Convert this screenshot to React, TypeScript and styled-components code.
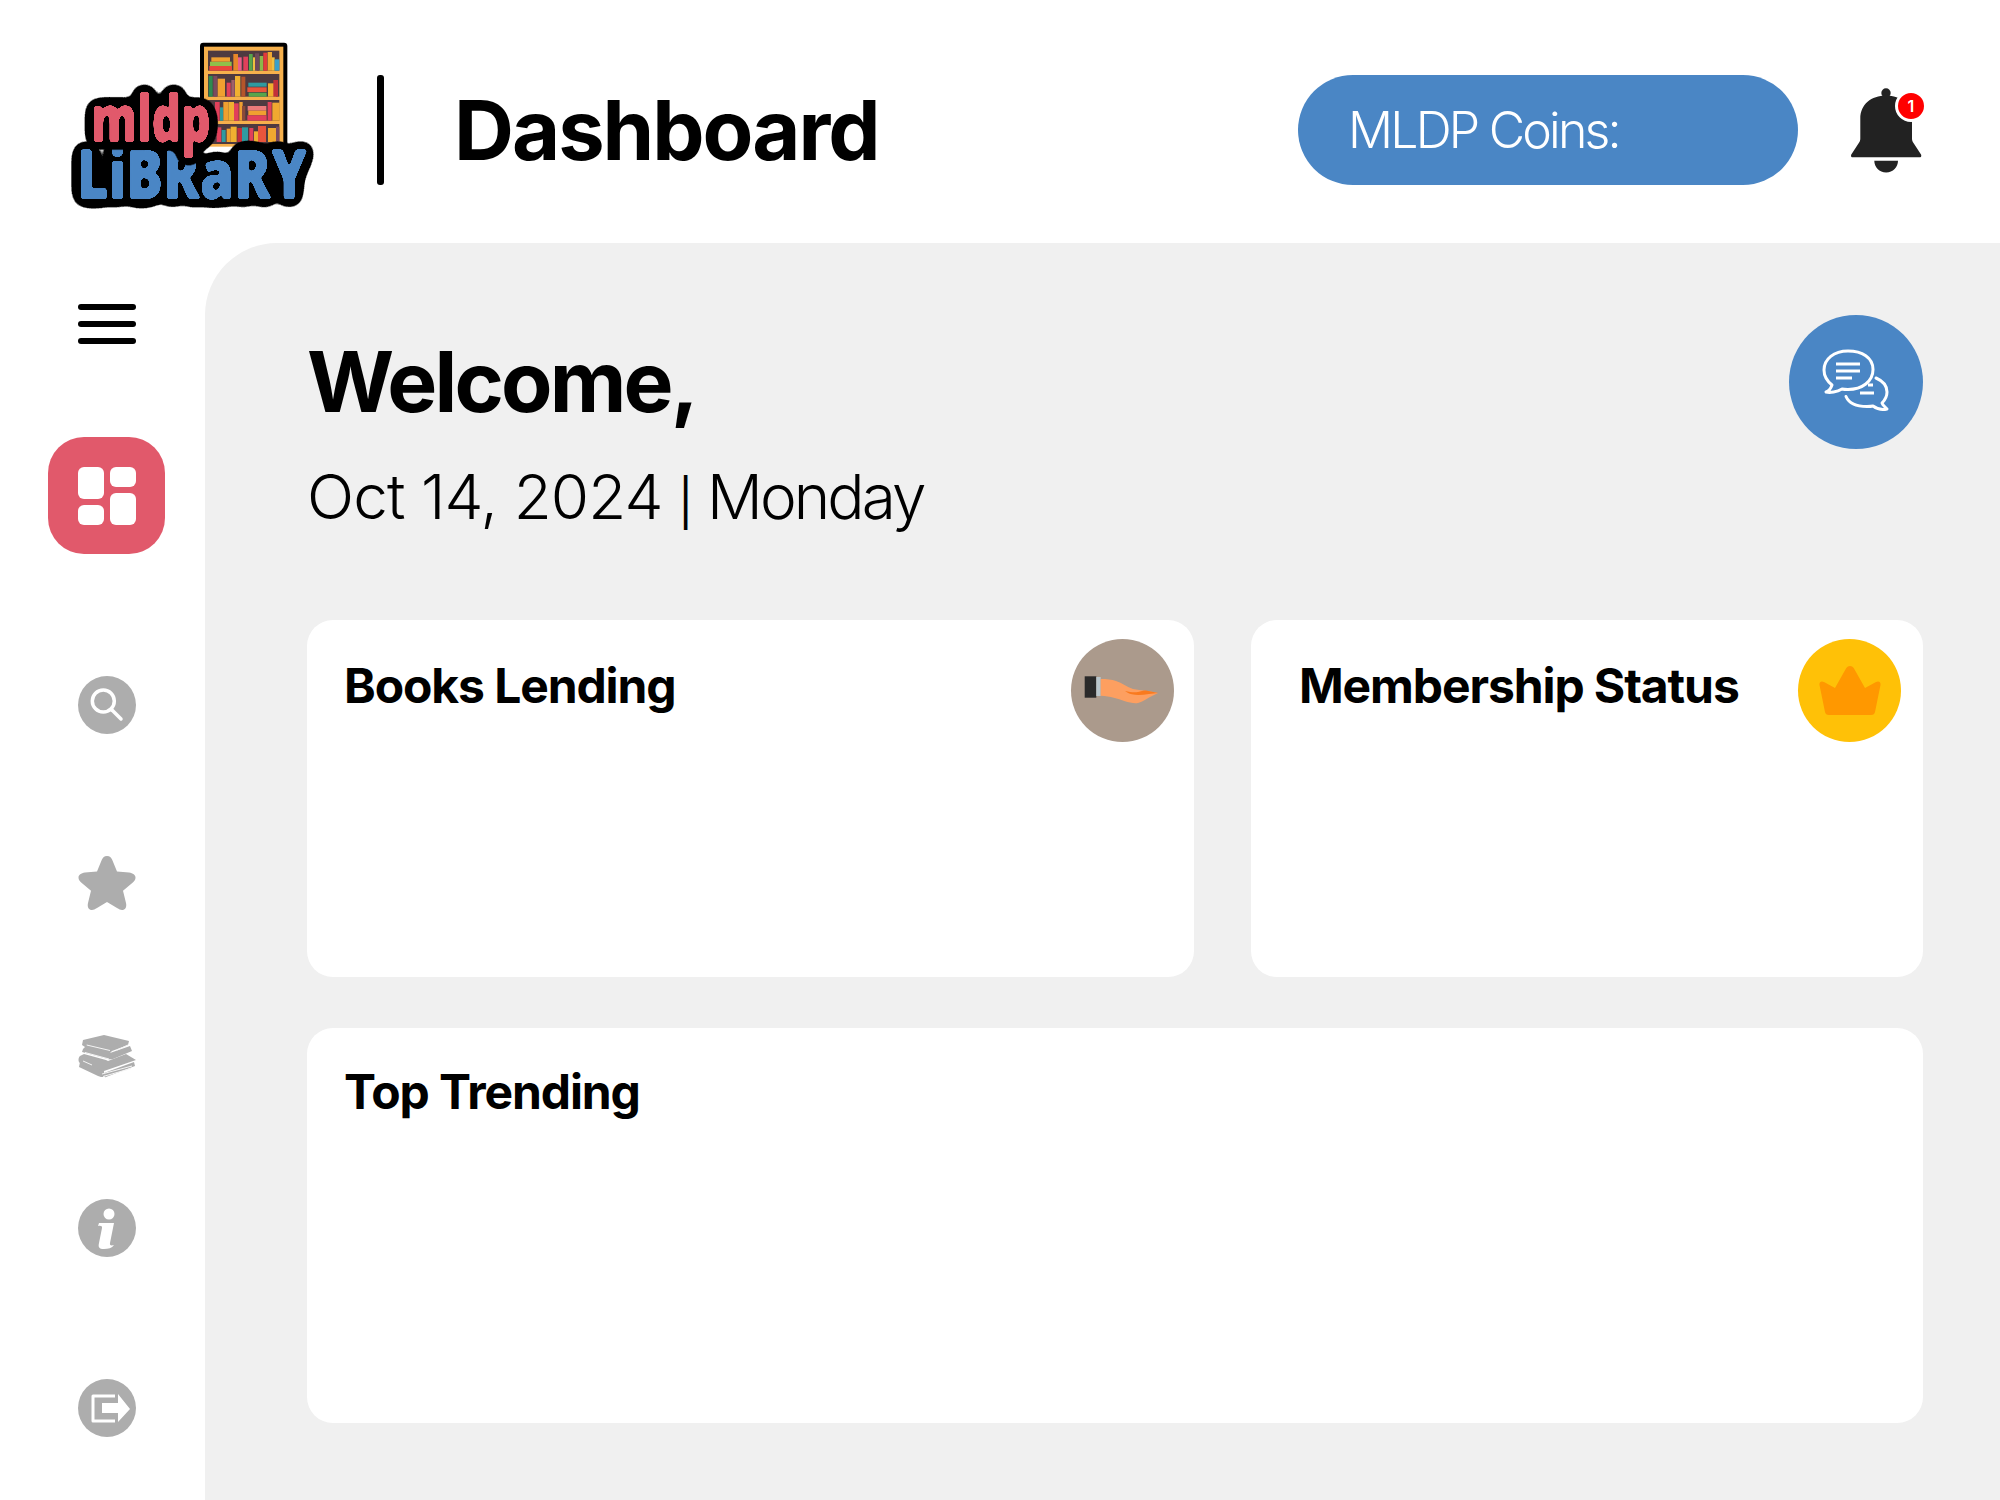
import { FC, ReactNode } from "react";
import styled, { createGlobalStyle } from "styled-components";

const GlobalStyle = createGlobalStyle`
  html, body {
    margin: 0;
    padding: 0;
    background: #fff;
    font-family: "Inter", "Liberation Sans", sans-serif;
    color: #000;
  }
`;

const Page = styled.div`
  width: 2000px;
  height: 1500px;
  overflow: hidden;
  display: flex;
  flex-direction: column;
`;

const Header = styled.header`
  height: 243px;
  flex-shrink: 0;
  display: flex;
  align-items: center;
  padding: 17px 78px 0 70px;
  box-sizing: border-box;
`;

const LogoBox = styled.svg`
  width: 250px;
  height: 190px;
  flex-shrink: 0;
  margin-top: 10px;
`;

const Divider = styled.div`
  width: 7px;
  height: 110px;
  border-radius: 3px;
  background: #000;
  margin: 0 70px 0 57px;
`;

const PageTitle = styled.h1`
  margin: 0;
  font-size: 83px;
  font-weight: 700;
  letter-spacing: -2px;
  flex-grow: 1;
`;

const CoinsPill = styled.div`
  width: 500px;
  height: 110px;
  border-radius: 55px;
  background: #4a86c5;
  color: #fff;
  font-size: 50px;
  font-weight: 300;
  letter-spacing: -2.8px;
  display: flex;
  align-items: center;
  padding-left: 50px;
  box-sizing: border-box;
  margin-right: 53px;
`;

const BellWrap = styled.div`
  position: relative;
  width: 71px;
  height: 85px;
  flex-shrink: 0;
`;

const BellBadge = styled.span`
  position: absolute;
  top: 2px;
  right: -5px;
  width: 26px;
  height: 26px;
  border-radius: 50%;
  background: #ff0000;
  border: 3px solid #fff;
  color: #fff;
  font-size: 16px;
  font-weight: 600;
  display: flex;
  align-items: center;
  justify-content: center;
`;

const Body = styled.div`
  display: flex;
  flex-grow: 1;
  min-height: 0;
`;

const Sidebar = styled.nav`
  width: 205px;
  flex-shrink: 0;
  display: flex;
  flex-direction: column;
  align-items: center;
  padding: 61px 0 0 8px;
  box-sizing: border-box;
`;

const Burger = styled.div`
  width: 58px;
  display: flex;
  flex-direction: column;
  gap: 11px;
  margin-bottom: 93px;
`;

const BurgerLine = styled.span`
  height: 6px;
  border-radius: 3px;
  background: #000;
`;

const ActiveButton = styled.div`
  width: 117px;
  height: 117px;
  border-radius: 36px;
  background: #e1596b;
  display: flex;
  align-items: center;
  justify-content: center;
`;

const NavIcon = styled.svg<{ $mt: number }>`
  width: 58px;
  height: 58px;
  margin-top: ${(p) => p.$mt}px;
  flex-shrink: 0;
`;

const Panel = styled.main`
  flex-grow: 1;
  background: #f0f0f0;
  border-top-left-radius: 72px;
  padding: 72px 77px 0 102px;
  box-sizing: border-box;
`;

const WelcomeRow = styled.div`
  display: flex;
  justify-content: space-between;
  align-items: flex-start;
  height: 305px;
`;

const Welcome = styled.h2`
  margin: 25px 0 0;
  font-size: 84px;
  line-height: 84px;
  font-weight: 700;
  letter-spacing: -2.8px;
`;

const DateLine = styled.div`
  margin-top: 38px;
  font-size: 62px;
  line-height: 70px;
  font-weight: 300;
  letter-spacing: -0.9px;
  color: #000;
`;

const DateBar = styled.span`
  font-size: 46px;
  font-weight: 400;
  margin-left: -1px;
`;

const DateDay = styled.span`
  letter-spacing: -2.9px;
  margin-left: -2px;
`;

const ChatButton = styled.div`
  width: 134px;
  height: 134px;
  border-radius: 50%;
  background: #4a86c5;
  display: flex;
  align-items: center;
  justify-content: center;
`;

const CardGrid = styled.div`
  display: grid;
  grid-template-columns: 887px 672px;
  grid-template-rows: 357px 395px;
  column-gap: 57px;
  row-gap: 51px;
`;

const Card = styled.section<{ $wide?: boolean; $pad?: number }>`
  position: relative;
  background: #fff;
  border-radius: 26px;
  padding: ${(p) => (p.$wide ? "36px" : "38px")} 20px 0 ${(p) => p.$pad ?? 37}px;
  box-sizing: border-box;
  grid-column: ${(p) => (p.$wide ? "1 / span 2" : "auto")};
`;

const CardTitle = styled.h3`
  margin: 0;
  font-size: 48px;
  line-height: 56px;
  font-weight: 700;
  letter-spacing: -1.1px;
`;

const CardBadge = styled.div<{ $bg: string; $right: number }>`
  position: absolute;
  top: 19px;
  right: ${(p) => p.$right}px;
  width: 103px;
  height: 103px;
  border-radius: 50%;
  background: ${(p) => p.$bg};
  display: flex;
  align-items: center;
  justify-content: center;
`;

const GREY = "#adadad";

// shelf drawn in the 3x coordinates of the logo's viewBox: [x, y, w, h, colour]
const shelfBooks: [number, number, number, number, string][] = [
  [478, 108, 68, 14, "#e8453c"],
  [480, 95, 65, 13, "#8fc04a"],
  [484, 82, 56, 13, "#f0a030"],
  [550, 72, 14, 50, "#e8872a"],
  [564, 82, 11, 40, "#ec5f8a"],
  [580, 80, 14, 42, "#e2405a"],
  [597, 72, 11, 50, "#58a54b"],
  [609, 82, 11, 40, "#f0c040"],
  [615, 70, 12, 52, "#6d4a5a"],
  [629, 78, 11, 44, "#8ab84a"],
  [640, 68, 12, 54, "#e23a3a"],
  [653, 66, 13, 56, "#f0a830"],
  [666, 82, 8, 40, "#f0c040"],
  [674, 88, 14, 34, "#3aa0c8"],
  [476, 138, 12, 62, "#2f8a4f"],
  [490, 138, 12, 62, "#7a4a5e"],
  [503, 146, 22, 54, "#f0a030"],
  [530, 158, 12, 42, "#e2405a"],
  [544, 150, 10, 50, "#a0606a"],
  [555, 138, 16, 62, "#f0b030"],
  [574, 140, 12, 60, "#b5552a"],
  [595, 158, 55, 12, "#2f9aa0"],
  [592, 172, 58, 14, "#e8553c"],
  [596, 188, 54, 12, "#58a54b"],
  [654, 160, 24, 40, "#f0b030"],
  [670, 150, 14, 50, "#c2303a"],
  [495, 216, 14, 56, "#e2405a"],
  [510, 232, 10, 40, "#2f9aa0"],
  [520, 216, 16, 56, "#f0a030"],
  [536, 216, 16, 56, "#f0b030"],
  [552, 220, 14, 52, "#e2405a"],
  [568, 216, 10, 56, "#f0a030"],
  [576, 228, 10, 44, "#8a4a3a"],
  [593, 228, 56, 14, "#ec7a7a"],
  [595, 242, 54, 14, "#f0a030"],
  [592, 256, 58, 16, "#e2405a"],
  [653, 216, 12, 56, "#e2405a"],
  [667, 218, 22, 54, "#f0a830"],
  [500, 292, 14, 44, "#e2405a"],
  [515, 300, 12, 36, "#2f9aa0"],
  [530, 296, 12, 40, "#f0a030"],
  [542, 290, 18, 46, "#f0b030"],
  [562, 294, 14, 42, "#c2303a"],
  [576, 292, 18, 44, "#2f9aa0"],
  [598, 294, 12, 42, "#e2405a"],
  [612, 304, 12, 32, "#f0b030"],
  [624, 288, 24, 48, "#e8553c"],
  [654, 294, 24, 42, "#f0a830"],
  [678, 290, 10, 46, "#7a4a5e"],
];

const Logo: FC = () => (
  <LogoBox viewBox="60 30 750 570">
    <defs>
      <filter id="blob" x="-15%" y="-30%" width="130%" height="160%" colorInterpolationFilters="sRGB">
        <feGaussianBlur in="SourceGraphic" stdDeviation="4.500" result="soft" />
        <feColorMatrix in="soft" type="matrix" values="1 0 0 0 0  0 1 0 0 0  0 0 1 0 0  0 0 0 20 -8" result="fill" />
        <feGaussianBlur in="SourceAlpha" stdDeviation="19" result="wide" />
        <feColorMatrix in="wide" type="matrix" values="0 0 0 0 0  0 0 0 0 0  0 0 0 0 0  0 0 0 40 -2" result="edge" />
        <feMerge>
          <feMergeNode in="edge" />
          <feMergeNode in="fill" />
        </feMerge>
      </filter>
    </defs>
    <rect x="450" y="38" width="262" height="310" rx="10" fill="#000" />
    <rect x="462" y="50" width="238" height="300" fill="#f6b04c" />
    <rect x="474" y="62" width="214" height="280" fill="#4e3a40" />
    <rect x="470" y="122" width="222" height="10" fill="#f6b04c" />
    <rect x="470" y="200" width="222" height="10" fill="#f6b04c" />
    <rect x="470" y="272" width="222" height="10" fill="#f6b04c" />
    {shelfBooks.map(([x, y, w, h, c]) => (
      <rect key={`${x}-${y}`} x={x} y={y} width={w} height={h} fill={c} />
    ))}
    <g fontFamily="'Open Sans', 'DejaVu Sans', sans-serif" fontWeight="800">
      <text x="80" y="506" fontSize="208" textLength="692" lengthAdjust="spacingAndGlyphs" fill="#4a86c5" filter="url(#blob)">
        LiBRaRY
      </text>
      <text x="124" y="335" fontSize="195" textLength="358" lengthAdjust="spacingAndGlyphs" fill="#e1596b" filter="url(#blob)">
        mldp
      </text>
    </g>
  </LogoBox>
);

const Bell: FC = () => (
  <svg width="71" height="85" viewBox="0 0 71 85" fill="#222">
    <circle cx="35" cy="5" r="4.700" />
    <path d="M35 7.500c15 0 26 9 26 23v20c0 2 .5 3 1.500 4.500L70 66.500c.7 1.500 0 2.800-1.500 2.800H1.800C.3 69.300-.4 68 .3 66.500L7.800 55c1-1.500 1.500-2.500 1.500-4.500v-20c0-14 11-23 25.700-23z" />
    <path d="M23.300 72.700H47c0 6.500-5 11.800-11.800 11.800s-11.900-5.300-11.900-11.800z" />
  </svg>
);

const GridGlyph: FC = () => (
  <svg width="58" height="58" viewBox="0 0 58 58" fill="#fff">
    <rect x="0" y="0" width="26" height="32" rx="6" />
    <rect x="32" y="0" width="26" height="20" rx="6" />
    <rect x="0" y="38" width="26" height="20" rx="6" />
    <rect x="32" y="26" width="26" height="32" rx="6" />
  </svg>
);

const Hand: FC = () => (
  <svg width="103" height="103" viewBox="0 0 103 103">
    <rect x="13.700" y="37.300" width="11.600" height="21.400" fill="#2a2a2a" />
    <rect x="25.300" y="38" width="4.400" height="19" fill="#b9c6cc" />
    <path d="M29.700 40c6 0 11 .5 15.300 2 6 2 11 6 17 8 8 1.500 17 2 25 4l-8 4c-4 2-8 5-12 6-4 .6-9-.5-13-1.700-8-3-14-5-24.300-5.600z" fill="#fd9f60" />
    <path d="M54 52c6 1.500 10 1.500 13 1 3-.8 5-1.500 8-1.500l12 2.500-9 1c-6 .8-12 1.500-17 .3-3-.8-5-1.800-7-3.300z" fill="#f97a1e" />
  </svg>
);

const Crown: FC = () => (
  <svg width="62" height="50" viewBox="0 0 62 50">
    <path
      d="M31 0c2 0 3 1 4 2.500l11 19.500 11-6c3-1.500 5 .5 4.500 3L56 46c-.5 2-1.500 3-4 3H10c-2.500 0-3.500-1-4-3L.5 19c-.5-2.500 1.500-4.500 4.500-3l11 6L27 2.500C28 1 29 0 31 0z"
      fill="#ff9800"
    />
  </svg>
);

const Chat: FC = () => (
  <svg width="68" height="66" viewBox="0 0 68 66" fill="none" stroke="#fff" strokeWidth="3" strokeLinecap="round" strokeLinejoin="round">
    <path d="M26 2C12 2 2 10 2 21c0 6 3 11 8 15-1 3-3 6-6 7 4 1 11 0 16-3 2 .5 4 .5 6 .5 14 0 25-8 25-20S40 2 26 2z" />
    <path d="M14 15h24M14 22h24M14 29h16" strokeLinecap="butt" />
    <path d="M54 29c7 3 11 8 11 14 0 4-2 8-5 11 .5 2 3 4 5 6-4 1-10 0-14-3-2 .5-4 .5-6 .5-10 0-18-3-21-10" />
    <path d="M51 36h-5M52 44H38" strokeLinecap="butt" />
  </svg>
);

interface IconProps {
  mt: number;
  children: ReactNode;
}

const SideIcon: FC<IconProps> = ({ mt, children }) => (
  <NavIcon $mt={mt} viewBox="0 0 58 58">
    {children}
  </NavIcon>
);

const App: FC = () => {
  return (
    <Page>
      <GlobalStyle />
      <Header>
        <Logo />
        <Divider />
        <PageTitle>Dashboard</PageTitle>
        <CoinsPill>MLDP Coins:</CoinsPill>
        <BellWrap>
          <Bell />
          <BellBadge>1</BellBadge>
        </BellWrap>
      </Header>
      <Body>
        <Sidebar>
          <Burger>
            <BurgerLine />
            <BurgerLine />
            <BurgerLine />
          </Burger>
          <ActiveButton>
            <GridGlyph />
          </ActiveButton>
          <SideIcon mt={122}>
            <circle cx="29" cy="29" r="29" fill={GREY} />
            <circle cx="25.300" cy="25" r="11" fill="none" stroke="#fff" strokeWidth="3.500" />
            <path d="M34 34l9 9" stroke="#fff" strokeWidth="3.500" strokeLinecap="round" />
          </SideIcon>
          <SideIcon mt={122}>
            <path
              d="M29 0c3 0 4.500 2 5.500 4.500l4.500 11 12 1c4 .5 6.500 2.500 6.500 5 0 2-1 3.500-3 5.200l-9.500 8 3 12.300c1 4.500-1 7-4 7-1.500 0-3-.7-5-2L29 46l-10 6c-2 1.300-3.500 2-5 2-3 0-5-2.500-4-7l3-12.300-9.500-8C1.500 25 .5 23.500.5 21.500c0-2.500 2.500-4.500 6.500-5l12-1 4.500-11C24.500 2 26 0 29 0z"
              fill={GREY}
            />
          </SideIcon>
          <SideIcon mt={116}>
            <g transform="translate(0,5)">
              <path d="M5 5L26 0l25 6-1 4-16 6-2 2 20-7 2 5-19 8c-2 .5-4 .3-6-.3L4 17l1-3 2-2-3-2z" fill={GREY} />
              <path d="M2 21l4-2 22 6 2 1 18-7 10 6-32 11c-2 1-4 1-6 0L2 28c-2-1-2-5 0-7z" fill={GREY} />
              <path d="M26 38l30-11 1 4-29 11c-2 1-2-2-2-4z" fill={GREY} />
              <path d="M2 27l24 9 0 6c-2 0-4 0-6-1L1 32z" fill={GREY} />
              <path d="M8.700 10L32 15.500M39 15l11-5M7 17.500l24 6.500M5 26l9 4M24 39l30-8M25 41.500l28-8" fill="none" stroke="#f4f4f4" strokeWidth="1" />
            </g>
          </SideIcon>
          <SideIcon mt={111}>
            <circle cx="29" cy="29" r="29" fill={GREY} />
            <circle cx="31" cy="15" r="5.500" fill="#fff" />
            <path
              d="M21 24h15l-4 20c-.4 2 .5 3 4 2-2 3-6 4-10 4-5 0-6-2-5-6l3-15c.3-2-1-2.500-4-2z"
              fill="#fff"
            />
          </SideIcon>
          <SideIcon mt={122}>
            <circle cx="29" cy="29" r="29" fill={GREY} />
            <path d="M37 17H15v25h22" fill="none" stroke="#fff" strokeWidth="3" strokeLinejoin="round" />
            <path d="M24 24h16v-9l12 15-12 13v-9H24z" fill="#fff" />
          </SideIcon>
        </Sidebar>
        <Panel>
          <WelcomeRow>
            <div>
              <Welcome>Welcome,</Welcome>
              <DateLine>
                Oct 14, 2024 <DateBar>|</DateBar> <DateDay>Monday</DateDay>
              </DateLine>
            </div>
            <ChatButton>
              <Chat />
            </ChatButton>
          </WelcomeRow>
          <CardGrid>
            <Card>
              <CardTitle>Books Lending</CardTitle>
              <CardBadge $bg="#ab9a8c" $right={20}>
                <Hand />
              </CardBadge>
            </Card>
            <Card $pad={48}>
              <CardTitle>Membership Status</CardTitle>
              <CardBadge $bg="#ffc107" $right={22}>
                <Crown />
              </CardBadge>
            </Card>
            <Card $wide>
              <CardTitle>Top Trending</CardTitle>
            </Card>
          </CardGrid>
        </Panel>
      </Body>
    </Page>
  );
};

export default App;
